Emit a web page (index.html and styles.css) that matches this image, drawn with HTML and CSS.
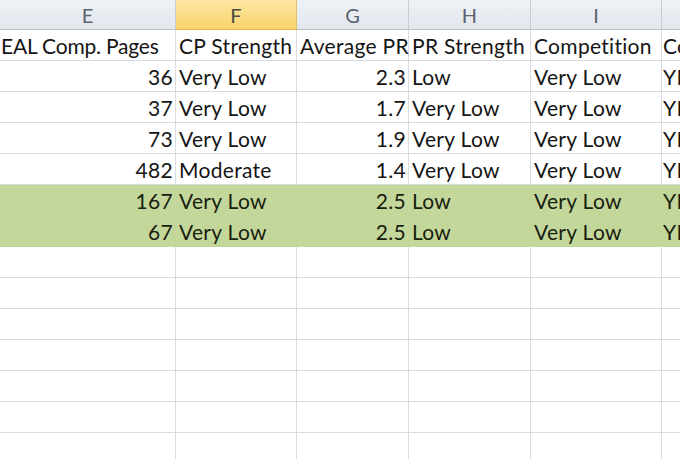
FILE: index.html
```html
<!DOCTYPE html>
<html>
<head>
<meta charset="utf-8">
<link rel="stylesheet" href="styles.css">
</head>
<body>
<div class="sheet">
  <div class="row head">
    <div class="c">E</div>
    <div class="c sel">F</div>
    <div class="c">G</div>
    <div class="c">H</div>
    <div class="c">I</div>
    <div class="c"></div>
  </div>
  <div class="row">
    <div class="c l first">EAL Comp. Pages</div>
    <div class="c l">CP Strength</div>
    <div class="c l">Average PR</div>
    <div class="c l">PR Strength</div>
    <div class="c l">Competition</div>
    <div class="c l last">Co</div>
  </div>
  <div class="row">
    <div class="c r">36</div><div class="c l">Very Low</div><div class="c r">2.3</div><div class="c l">Low</div><div class="c l">Very Low</div><div class="c l last">YE</div>
  </div>
  <div class="row">
    <div class="c r">37</div><div class="c l">Very Low</div><div class="c r">1.7</div><div class="c l">Very Low</div><div class="c l">Very Low</div><div class="c l last">YE</div>
  </div>
  <div class="row">
    <div class="c r">73</div><div class="c l">Very Low</div><div class="c r">1.9</div><div class="c l">Very Low</div><div class="c l">Very Low</div><div class="c l last">YE</div>
  </div>
  <div class="row">
    <div class="c r">482</div><div class="c l">Moderate</div><div class="c r">1.4</div><div class="c l">Very Low</div><div class="c l">Very Low</div><div class="c l last">YE</div>
  </div>
  <div class="row green">
    <div class="c r">167</div><div class="c l">Very Low</div><div class="c r">2.5</div><div class="c l">Low</div><div class="c l">Very Low</div><div class="c l last">YE</div>
  </div>
  <div class="row green">
    <div class="c r">67</div><div class="c l">Very Low</div><div class="c r">2.5</div><div class="c l">Low</div><div class="c l">Very Low</div><div class="c l last">YE</div>
  </div>
  <div class="row"><div class="c"></div><div class="c"></div><div class="c"></div><div class="c"></div><div class="c"></div><div class="c"></div></div>
  <div class="row"><div class="c"></div><div class="c"></div><div class="c"></div><div class="c"></div><div class="c"></div><div class="c"></div></div>
  <div class="row"><div class="c"></div><div class="c"></div><div class="c"></div><div class="c"></div><div class="c"></div><div class="c"></div></div>
  <div class="row"><div class="c"></div><div class="c"></div><div class="c"></div><div class="c"></div><div class="c"></div><div class="c"></div></div>
  <div class="row"><div class="c"></div><div class="c"></div><div class="c"></div><div class="c"></div><div class="c"></div><div class="c"></div></div>
  <div class="row"><div class="c"></div><div class="c"></div><div class="c"></div><div class="c"></div><div class="c"></div><div class="c"></div></div>
  <div class="row"><div class="c"></div><div class="c"></div><div class="c"></div><div class="c"></div><div class="c"></div><div class="c"></div></div>
</div>
</body>
</html>
```
FILE: styles.css
```css
html, body {
  margin: 0;
  padding: 0;
  background: #fff;
  overflow: hidden;
}
.sheet {
  width: 680px;
  height: 459px;
  overflow: hidden;
  font-family: Lato, "Open Sans", sans-serif;
  font-size: 21px;
  letter-spacing: 0.3px;
  color: #151515;
}
.row {
  display: grid;
  grid-template-columns: 176px 121px 112px 122px 131px 120px;
  height: 31px;
}
.c {
  box-sizing: border-box;
  border-right: 1px solid #dadcdf;
  border-bottom: 1px solid #dadcdf;
  display: flex;
  align-items: center;
  white-space: nowrap;
  min-width: 0;
  padding: 1px 2px 0 3px;
}
.c.first { padding-left: 1px; letter-spacing: -0.2px; }
.c.last { padding-left: 1px; }
.c.l { justify-content: flex-start; }
.c.r { justify-content: flex-end; }
.head {
  height: 30px;
}
.head .c {
  justify-content: center;
  padding: 0;
  letter-spacing: 0;
  background: linear-gradient(#eef1f5, #e2e7ee);
  border-right: 1px solid #c8ccd3;
  border-bottom: 1px solid #b9bfc9;
  color: #5a636f;
  font-size: 20px;
}
.head .c.sel {
  background: linear-gradient(#fce6a3, #f8d46c);
  border-bottom: 1px solid #e9b443;
  border-right: 1px solid #e1c06c;
  color: #4a4a40;
}
.green .c {
  background: #c4d79b;
  border-color: #c4d79b;
  color: #18200f;
}
```
